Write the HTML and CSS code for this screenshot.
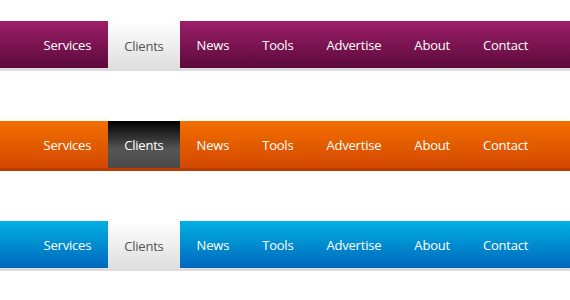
FILE: index.html
```html
<!DOCTYPE html>
<html lang="en">
<head>
    <meta charset="UTF-8">
    <title>Menus</title>
    <link rel="stylesheet" href="styles.css">
</head>
<body>
    <div class="wrap">
        <ul class="menu purple">
            <li><a href="#">Services</a></li>
            <li class="active"><a href="#">Clients</a></li>
            <li><a href="#">News</a></li>
            <li><a href="#">Tools</a></li>
            <li><a href="#">Advertise</a></li>
            <li><a href="#">About</a></li>
            <li><a href="#">Contact</a></li>
        </ul>

        <ul class="menu orange">
            <li><a href="#">Services</a></li>
            <li class="active"><a href="#">Clients</a></li>
            <li><a href="#">News</a></li>
            <li><a href="#">Tools</a></li>
            <li><a href="#">Advertise</a></li>
            <li><a href="#">About</a></li>
            <li><a href="#">Contact</a></li>
        </ul>

        <ul class="menu blue">
            <li><a href="#">Services</a></li>
            <li class="active"><a href="#">Clients</a></li>
            <li><a href="#">News</a></li>
            <li><a href="#">Tools</a></li>
            <li><a href="#">Advertise</a></li>
            <li><a href="#">About</a></li>
            <li><a href="#">Contact</a></li>
        </ul>
    </div>
</body>
</html>
```
FILE: styles.css
```css
body {
    margin: 0;
    padding: 0;
    background: #fff;
    font-family: "Open Sans", Arial, sans-serif;
}
.wrap {
    padding-top: 21px;
}
.menu {
    display: flex;
    height: 47px;
    margin: 0 0 50px;
    padding: 0 0 0 27px;
    list-style: none;
    border-bottom: 3px solid #ddd;
}
.menu:last-child {
    margin-bottom: 0;
}
.menu li {
    display: flex;
}
.menu a {
    display: flex;
    align-items: center;
    padding: 0 16.5px 0 16.5px;
    color: #fff;
    font-size: 13px;
    letter-spacing: -0.2px;
    text-decoration: none;
}
.purple {
    background: linear-gradient(#9c1f6a, #5c0a3a);
}
.orange {
    background: linear-gradient(#f37000, #d24800);
    border-bottom-color: #b83c00;
}
.blue {
    background: linear-gradient(#00b0e2, #0068bd);
}
.menu .active {
    background: linear-gradient(#fff, #ddd);
    margin-bottom: -2px;
}
.menu .active a {
    color: #555;
}
.orange .active {
    background: linear-gradient(#000, #555 60%, #4a4a4a);
    margin-bottom: 0;
}
.orange .active a {
    color: #fff;
}
```
